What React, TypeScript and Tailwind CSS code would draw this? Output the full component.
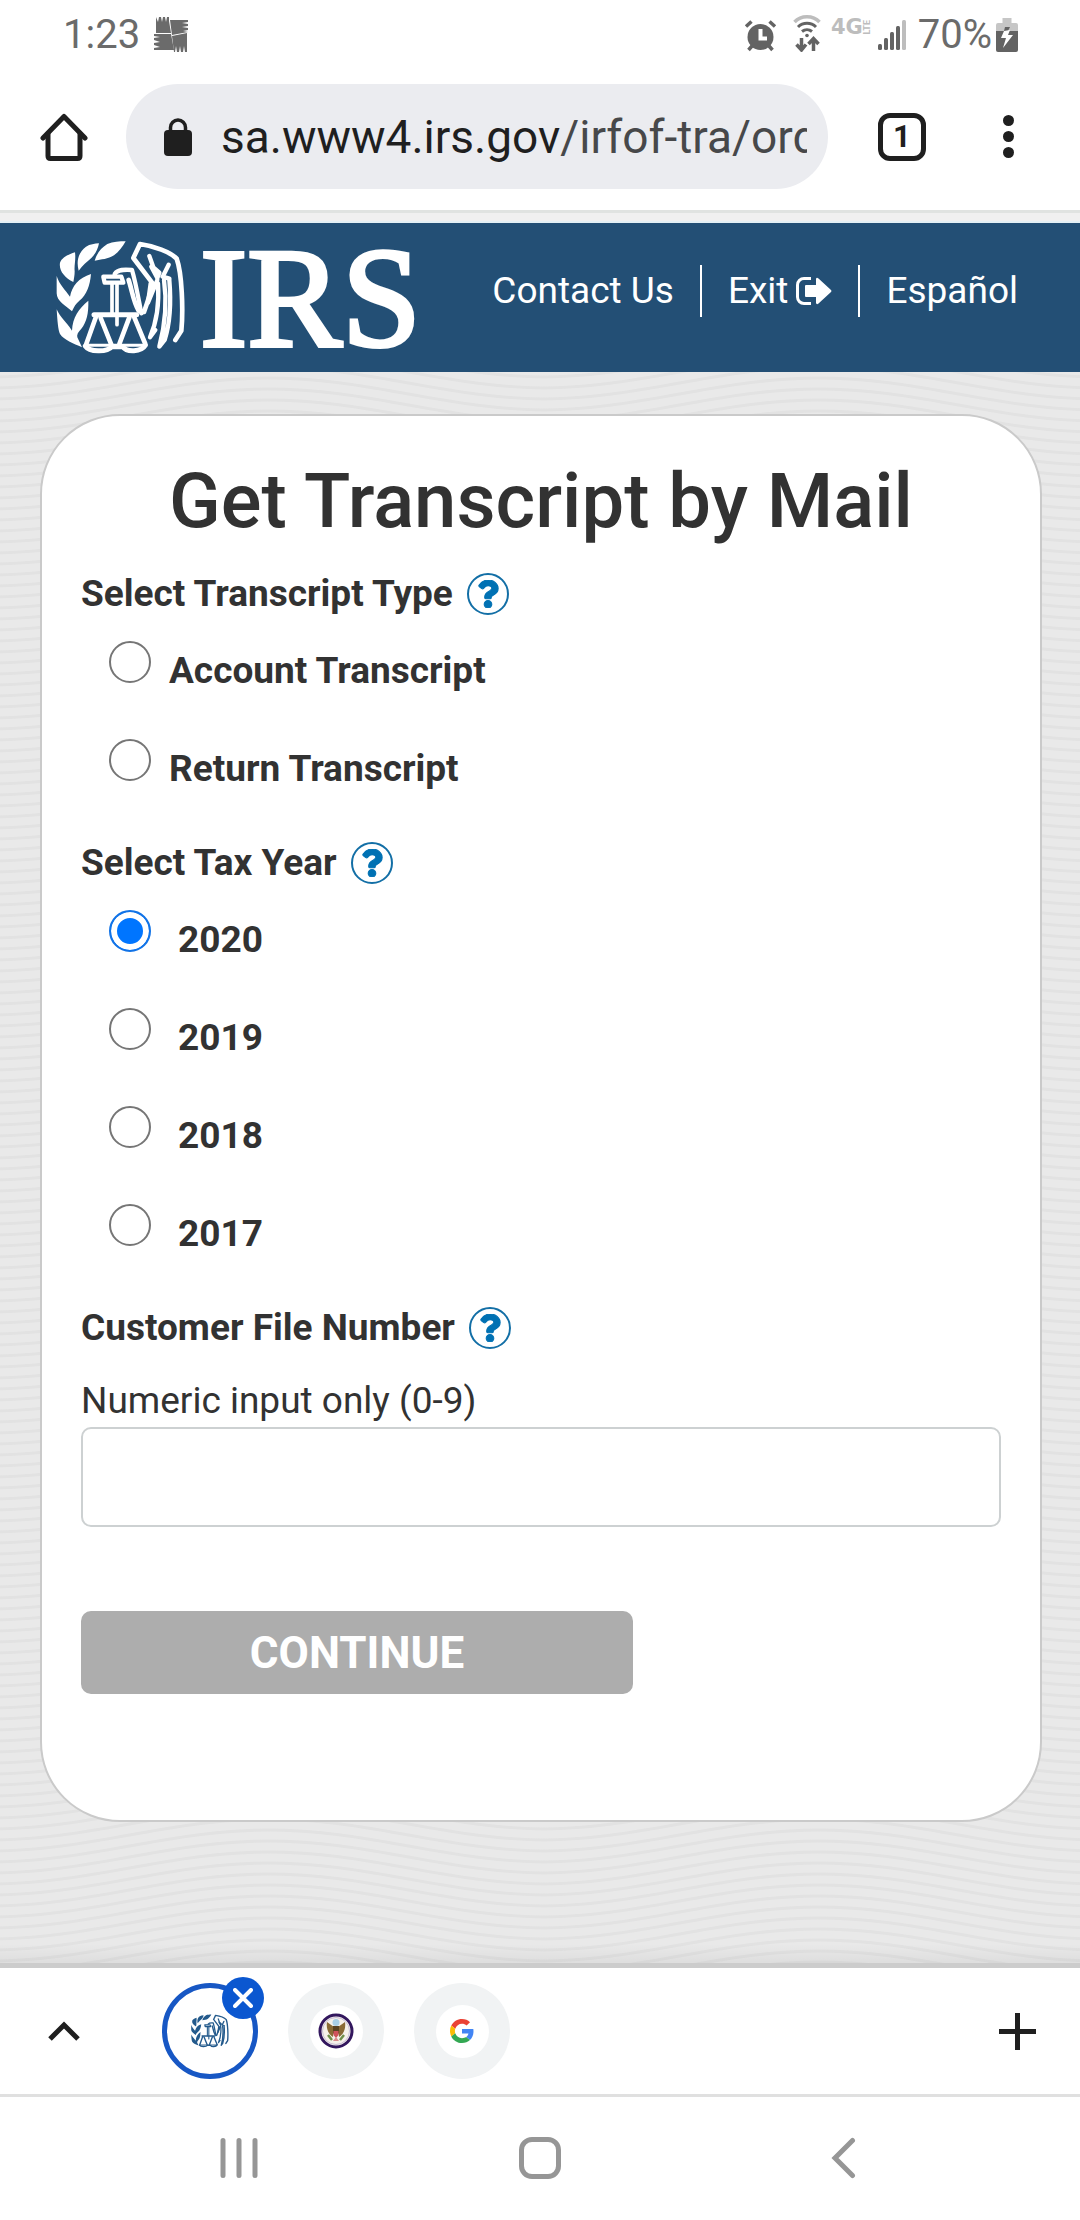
import { useState } from 'react';
import { FaQuestion } from 'react-icons/fa';

interface RadioOption {
  value: string;
  label: string;
}

const transcriptTypes: RadioOption[] = [
  { value: 'account', label: 'Account Transcript' },
  { value: 'return', label: 'Return Transcript' },
];

const taxYears: RadioOption[] = [
  { value: '2020', label: '2020' },
  { value: '2019', label: '2019' },
  { value: '2018', label: '2018' },
  { value: '2017', label: '2017' },
];

function EagleMark({ className }: { className?: string }) {
  return (
    <svg viewBox="36 30 390 345" className={className} fill="currentColor" aria-hidden="true">
      {/* laurel */}
      <path d="M152 92C160 66 172 54 190 42C208 35 226 34 245 34C236 50 224 66 210 76C192 88 172 88 152 92Z" />
      <path d="M104 122C96 92 104 66 126 50C138 43 152 41 165 40C162 56 156 70 142 84C128 96 116 106 104 122Z" />
      <path d="M88 156C62 142 44 122 48 98C54 82 72 74 93 67C96 90 90 106 92 124C92 136 90 146 88 156Z" />
      <path d="M38 138C46 164 64 180 78 200C84 168 104 144 141 132C138 166 128 196 106 212C96 220 90 230 84 244C66 228 38 214 38 190Z" />
      <path d="M38 238C48 262 68 276 84 302C86 262 104 236 133 212C134 250 128 276 112 296C102 306 98 314 100 322L114 352C88 340 60 330 48 312C42 300 40 270 38 238Z" />
      <g fill="none" stroke="currentColor" strokeWidth="13" strokeLinejoin="round" strokeLinecap="round">
        {/* scales */}
        <path d="M178 140H232L238 158H182Z" />
        <path d="M204 162V250M219 162V284" strokeWidth="11" />
        <path d="M150 254H278" strokeWidth="15" />
        <path d="M156 260L126 344M170 264L202 344" strokeWidth="14" />
        <path d="M256 262L226 342M270 260L304 342" strokeWidth="14" />
        <path d="M124 348C136 366 188 368 204 350L236 350C248 368 292 366 304 346" strokeWidth="15" />
        <path d="M128 346H300" strokeWidth="9" />
        {/* wing and head */}
        <path d="M212 132C222 118 240 118 264 120C276 160 284 210 292 250" strokeWidth="13" />
        <path d="M254 150C264 180 268 216 284 242L300 246C312 210 324 180 326 160L268 84L288 42C330 48 380 66 398 86C414 130 418 240 412 302L394 330" strokeWidth="14" />
        <path d="M316 78L328 112L346 128L340 144L322 110M374 104L356 140L376 146" />
        <path d="M340 150L312 218L320 160" />
        <path d="M342 160C346 220 336 280 318 322L334 300" />
        <path d="M360 150C370 220 362 290 346 350L362 330C378 280 382 220 376 150" />
      </g>
    </svg>
  );
}

function HomeIcon() {
  return (
    <svg viewBox="0 0 48 48" className="size-12" fill="none" stroke="currentColor" strokeWidth="5" strokeLinecap="round" strokeLinejoin="round" aria-hidden="true">
      <path d="M3 25L24 3.500L45 25" />
      <path d="M8 21V43Q8 45.500 10.500 45.500H37.500Q40 45.500 40 43V21" />
    </svg>
  );
}

function LockIcon() {
  return (
    <svg viewBox="0 0 30 38" className="h-[38px] w-[30px] shrink-0" aria-hidden="true">
      <rect x="1" y="12" width="28" height="26" rx="4" fill="#1f1f1f" />
      <path d="M7.500 14V9.500a7.500 7.500 0 0 1 15 0V14" fill="none" stroke="#1f1f1f" strokeWidth="3.500" />
    </svg>
  );
}

function AntivirusIcon() {
  return (
    <svg viewBox="0 0 35 36" className="h-9 w-[35px]" fill="#6b6b6b" aria-hidden="true">
      <path d="M2 0L4 5L5 0H7L8 5L9 0H11L12 5L13 0H15L15 4L17 16H2Z" />
      <path d="M16 3H34V5L28 6L34 7V9L28 10L34 11V13L29 14L34 15L18 18Z" />
      <path d="M0 17H17L20 33H0V31L6 30L0 28V26L6 25L0 23V21L6 20L0 19Z" />
      <path d="M18 19L33 16V35H31L30 29L29 35H27L26 29L25 35H23L22 29L21 35H20Z" />
    </svg>
  );
}

function StatusBar() {
  return (
    <div className="flex h-[66px] items-center pt-1 pr-[62px] pl-[63px] text-[#6b6b6b]">
      <span className="text-[40px] leading-[60px]">1:23</span>
      <span className="ml-3.5">
        <AntivirusIcon />
      </span>
      <div className="ml-auto flex items-center">
        {/* alarm */}
        <svg viewBox="0 0 33 33" className="size-[33px]" fill="#636363" aria-hidden="true">
          <circle cx="16.500" cy="18" r="13" />
          <path d="M2 7.500L7.500 2.500M31 7.500L25.500 2.500M4.500 31L8 27M28.500 31L25 27" stroke="#636363" strokeWidth="3.500" />
          <path d="M16.500 10V19.500H23" fill="none" stroke="#fff" strokeWidth="4" />
        </svg>
        {/* wifi with traffic arrows */}
        <svg viewBox="0 0 28 38" className="mb-1 ml-4 h-[38px] w-7" fill="none" aria-hidden="true">
          <path d="M1.500 8C8 1 20 1 26.500 8" stroke="#bdbdbd" strokeWidth="3.500" />
          <path d="M5 13C10 8 18 8 23 13M9 17.500C12 15 16 15 19 17.500" stroke="#636363" strokeWidth="3" />
          <circle cx="14" cy="21.500" r="1.800" fill="#636363" />
          <path d="M8.500 24V35M3.500 30.500L8.500 36L13 30.500M20.500 37V26M15.500 30L20.500 24.500L25.500 30" stroke="#636363" strokeWidth="3.500" />
        </svg>
        <span className="mb-4 ml-2.5 flex h-5 items-center text-[#bdbdbd]">
          <span className="font-['DejaVu_Sans',sans-serif] text-[21px] leading-5 font-bold">4G</span>
          <span className="rotate-180 text-[9px] leading-[9px] font-bold [writing-mode:vertical-rl]">LTE</span>
        </span>
        {/* signal */}
        <svg viewBox="0 0 28 32" className="ml-1.5 h-8 w-7" aria-hidden="true">
          <rect x="0" y="25" width="4" height="6" rx="1.500" fill="#636363" />
          <rect x="6" y="19" width="4" height="12" rx="1.500" fill="#636363" />
          <rect x="12" y="13" width="4" height="18" rx="1.500" fill="#636363" />
          <rect x="18" y="7" width="4" height="24" rx="1.500" fill="#636363" />
          <rect x="24" y="1" width="4" height="30" rx="1.500" fill="#bdbdbd" />
        </svg>
        <span className="ml-3 text-[40px] leading-[60px]">70%</span>
        {/* battery */}
        <svg viewBox="0 0 22 34" className="ml-1 h-[34px] w-[22px]" aria-hidden="true">
          <path d="M6.500 0H15.500V5H20Q22 5 22 7V14H0V7Q0 5 2 5H6.500Z" fill="#c6c6c6" />
          <path d="M0 13H22V32Q22 34 20 34H2Q0 34 0 32Z" fill="#636363" />
          <path d="M9 9H14L12 13H8Z" fill="#636363" />
          <path d="M8 13L5 20H10L7 30L17 17H12L14 12Z" fill="#fff" />
        </svg>
      </div>
    </div>
  );
}

function BrowserBar() {
  return (
    <div className="flex items-center border-b-[3px] border-[#e0e3e1] pt-[18px] pr-16 pb-[21px] pl-10 text-[#1f1f1f]">
      <button type="button" aria-label="Home">
        <HomeIcon />
      </button>
      <button
        type="button"
        aria-label="Address bar"
        className="ml-[38px] flex h-[105px] min-w-0 flex-1 items-center rounded-full bg-[#ebecf0] pr-[21px] pl-[37px]"
      >
        <LockIcon />
        <span className="ml-7 min-w-0 flex-1 overflow-hidden text-left text-[46px] leading-[60px] whitespace-nowrap">
          sa.www4.irs.gov<span className="text-[#47484a]">/irfof-tra/order</span>
        </span>
      </button>
      <button
        type="button"
        aria-label="Open tabs"
        className="ml-[50px] flex size-12 items-center justify-center rounded-xl border-[5px] border-[#1f1f1f] text-[31px] leading-9 font-bold"
      >
        1
      </button>
      <button type="button" aria-label="Menu" className="ml-[74px] flex w-4 flex-col items-center gap-[5px]">
        <span className="size-[11px] rounded-full bg-[#1f1f1f]" />
        <span className="size-[11px] rounded-full bg-[#1f1f1f]" />
        <span className="size-[11px] rounded-full bg-[#1f1f1f]" />
      </button>
    </div>
  );
}

function SiteHeader() {
  return (
    <header className="flex h-[149px] items-center bg-[#234f75] pr-[62px] pl-14 text-white">
      <a href="#" aria-label="IRS home" className="flex items-center">
        <EagleMark className="h-[115px] w-[130px]" />
        <span className="ml-3.5 font-['Liberation_Serif',serif] text-[142px] leading-[146px] [-webkit-text-stroke:4px_#fff]">IRS</span>
      </a>
      <nav className="mb-3.5 ml-auto flex items-center text-[37px] leading-[52px]">
        <a href="#" className="pr-[26px]">Contact Us</a>
        <a href="#" className="flex items-center gap-2 border-x-2 border-white px-[26px]">
          Exit
          <svg viewBox="0 0 36 28" className="h-7 w-9" aria-hidden="true">
            <path d="M15 1.500H8a6.500 6.500 0 0 0-6.500 6.500V20a6.500 6.500 0 0 0 6.500 6.500H15" fill="none" stroke="#fff" strokeWidth="3" />
            <path d="M10 8H20V2Q20.500 0 22.500 1.500L35 13Q36 14 35 15L22.500 26.500Q20.500 28 20 26V20H10Q9 20 9 19V9Q9 8 10 8Z" fill="#fff" />
          </svg>
        </a>
        <a href="#" className="pl-[26px]">Español</a>
      </nav>
    </header>
  );
}

// Fine wave lines behind the card
function WaveBackground() {
  const rows = [-44, -33, -22, -11, 0, 11, 22, 33, 44];
  return (
    <svg className="absolute inset-0 size-full" aria-hidden="true">
      <defs>
        <pattern id="waves" x="-6" width="550" height="11" patternUnits="userSpaceOnUse">
          {rows.map(y => (
            <path
              key={y}
              d={`M-4 ${y + 16}C96 ${y + 16} 175 ${y - 16} 275 ${y - 16}S454 ${y + 16} 554 ${y + 16}`}
              fill="none"
              stroke="#e2e2e2"
              strokeWidth="3"
            />
          ))}
        </pattern>
      </defs>
      <rect width="100%" height="100%" fill="url(#waves)" />
    </svg>
  );
}

function HelpButton({ topic }: { topic: string }) {
  return (
    <button
      type="button"
      aria-label={`Help: ${topic}`}
      className="flex size-[42px] items-center justify-center rounded-full border-2 border-[#136fa6] text-[#0071b3]"
    >
      <FaQuestion className="h-7 w-[22px]" stroke="currentColor" strokeWidth="20" />
    </button>
  );
}

interface RadioGroupProps {
  name: string;
  legend: string;
  options: RadioOption[];
  value: string;
  onChange: (value: string) => void;
  labelClass: string;
}

function RadioGroup({ name, legend, options, value, onChange, labelClass }: RadioGroupProps) {
  return (
    <div role="radiogroup" aria-labelledby={`${name}-legend`}>
      <div className="flex items-center gap-3.5">
        <h2 id={`${name}-legend`} className="text-[37px] leading-10 font-bold">{legend}</h2>
        <HelpButton topic={legend} />
      </div>
      <div className="mt-[26px] ml-7 flex flex-col gap-12">
        {options.map(option => (
          <div key={option.value} className="flex items-start">
            <input
              type="radio"
              id={`${name}-${option.value}`}
              name={name}
              value={option.value}
              checked={value === option.value}
              onChange={() => onChange(option.value)}
              className="size-[42px] appearance-none rounded-full border-2 border-[#767676] bg-white checked:border-[#1273e6] checked:bg-[#0075ff] checked:shadow-[inset_0_0_0_6px_#fff]"
            />
            <label htmlFor={`${name}-${option.value}`} className={`pt-2.5 text-[37px] leading-10 font-bold ${labelClass}`}>
              {option.label}
            </label>
          </div>
        ))}
      </div>
    </div>
  );
}

function TranscriptForm() {
  const [type, setType] = useState('');
  const [year, setYear] = useState('2020');
  const [fileNumber, setFileNumber] = useState('');

  return (
    <form
      onSubmit={e => e.preventDefault()}
      className="relative rounded-[80px] border-2 border-[#cacaca] bg-white px-[39px] pt-10 pb-[126px] text-[#323232]"
    >
      <h1 className="text-center text-[76px] leading-[90px] font-medium">Get Transcript by Mail</h1>

      <div className="mt-[27px] flex flex-col gap-[53px]">
        <RadioGroup
          name="type"
          legend="Select Transcript Type"
          options={transcriptTypes}
          value={type}
          onChange={setType}
          labelClass="ml-[18px]"
        />
        <RadioGroup
          name="year"
          legend="Select Tax Year"
          options={taxYears}
          value={year}
          onChange={setYear}
          labelClass="ml-[27px]"
        />
        <div>
          <div className="flex items-center gap-3.5">
            <h2 className="text-[37px] leading-10 font-bold">Customer File Number</h2>
            <HelpButton topic="Customer File Number" />
          </div>
          <label htmlFor="file-number" className="mt-8 block text-[37px] leading-10">
            Numeric input only (0-9)
          </label>
          <input
            id="file-number"
            type="text"
            inputMode="numeric"
            value={fileNumber}
            onChange={e => setFileNumber(e.target.value.replace(/\D/g, ''))}
            className="mt-1.5 h-[100px] w-full rounded-[10px] border-2 border-[#cdd1d2] bg-white px-6 text-[37px]"
          />
        </div>
      </div>

      <button type="submit" className="mt-[84px] h-[83px] w-3/5 rounded-[10px] bg-[#adadad] text-[44px] font-bold text-white">
        CONTINUE
      </button>
    </form>
  );
}

function SealIcon() {
  return (
    <svg viewBox="0 0 36 36" className="size-9" aria-hidden="true">
      <circle cx="18" cy="18" r="16" fill="#f6f1ea" stroke="#33175e" strokeWidth="3" />
      <circle cx="18" cy="18" r="13.500" fill="none" stroke="#c9bfd8" strokeWidth="1" />
      <circle cx="18" cy="9.500" r="3.500" fill="#a9cfe6" />
      <path d="M9 9C8 15 10 21 15 24L16 14ZM27 9C28 15 26 21 21 24L20 14Z" fill="#8a6a35" />
      <path d="M15 13H21V20L18 24L15 20Z" fill="#5b4322" />
      <path d="M15.500 18H20.500V22L18 25L15.500 22Z" fill="#d0525b" />
      <path d="M10 22L14 27M26 22L22 27" stroke="#6f8f4a" strokeWidth="2.500" />
      <path d="M15 28L18 24L21 28Z" fill="#d98c8c" />
    </svg>
  );
}

function GoogleIcon() {
  return (
    <svg viewBox="0 0 48 48" className="size-6" aria-hidden="true">
      <path fill="#EA4335" d="M24 9.500c3.540 0 6.710 1.220 9.210 3.600l6.850-6.850C35.900 2.380 30.470 0 24 0 14.620 0 6.510 5.380 2.560 13.220l7.980 6.190C12.430 13.720 17.740 9.500 24 9.500z" />
      <path fill="#4285F4" d="M46.980 24.550c0-1.570-.15-3.090-.38-4.550H24v9.020h12.940c-.58 2.960-2.260 5.480-4.780 7.180l7.730 6c4.510-4.180 7.090-10.360 7.090-17.650z" />
      <path fill="#FBBC05" d="M10.530 28.590c-.48-1.450-.76-2.990-.76-4.590s.27-3.140.76-4.590l-7.980-6.190C.92 16.460 0 20.120 0 24c0 3.880.92 7.540 2.560 10.780l7.970-6.190z" />
      <path fill="#34A853" d="M24 48c6.480 0 11.930-2.130 15.890-5.810l-7.730-6c-2.150 1.450-4.920 2.300-8.160 2.300-6.260 0-11.570-4.220-13.470-9.910l-7.980 6.190C6.510 42.620 14.620 48 24 48z" />
    </svg>
  );
}

function TabStrip() {
  return (
    <div className="flex h-[129px] items-center border-b-[3px] border-[#e0e0e0] bg-white pr-11 pl-12 text-[#1f1f1f]">
      <button type="button" aria-label="Show tabs">
        <svg viewBox="0 0 32 20" className="h-5 w-8" fill="none" stroke="currentColor" strokeWidth="5" aria-hidden="true">
          <path d="M2 18L16 4L30 18" />
        </svg>
      </button>
      <div className="ml-[82px] flex items-center gap-[30px]">
        <div className="relative">
          <button
            type="button"
            aria-label="IRS tab"
            className="flex size-24 items-center justify-center rounded-full border-[5px] border-[#1757c4] bg-white text-[#235a8c]"
          >
            <EagleMark className="h-[34px] w-[38px]" />
          </button>
          <button
            type="button"
            aria-label="Close tab"
            className="absolute -top-1.5 -right-1.5 flex size-[42px] items-center justify-center rounded-full bg-[#0b57d0]"
          >
            <svg viewBox="0 0 20 20" className="size-5" stroke="#fff" strokeWidth="4" strokeLinecap="round" aria-hidden="true">
              <path d="M2 2L18 18M18 2L2 18" />
            </svg>
          </button>
        </div>
        <button type="button" aria-label="Passport tab" className="flex size-24 items-center justify-center rounded-full bg-[#f1f3f4]">
          <span className="flex size-[53px] items-center justify-center rounded-full bg-white">
            <SealIcon />
          </span>
        </button>
        <button type="button" aria-label="Google tab" className="flex size-24 items-center justify-center rounded-full bg-[#f1f3f4]">
          <span className="flex size-[53px] items-center justify-center rounded-full bg-white">
            <GoogleIcon />
          </span>
        </button>
      </div>
      <button type="button" aria-label="New tab" className="ml-auto">
        <svg viewBox="0 0 37 37" className="size-[37px]" stroke="currentColor" strokeWidth="5" aria-hidden="true">
          <path d="M18.500 0V37M0 18.500H37" />
        </svg>
      </button>
    </div>
  );
}

function SystemNav() {
  return (
    <div className="flex h-[123px] items-center justify-between bg-white px-[218px] pb-0.5 text-[#969696]">
      <button type="button" aria-label="Recent apps">
        <svg viewBox="0 0 42 42" className="size-[42px]" stroke="currentColor" strokeWidth="5" strokeLinecap="round" aria-hidden="true">
          <path d="M5 3.500V38.500M21 3.500V38.500M37 3.500V38.500" />
        </svg>
      </button>
      <button type="button" aria-label="Home screen" className="size-[42px] rounded-[13px] border-[5px] border-current" />
      <button type="button" aria-label="Back">
        <svg viewBox="0 0 42 42" className="size-[42px]" fill="none" stroke="currentColor" strokeWidth="5" strokeLinecap="round" aria-hidden="true">
          <path d="M32.500 3.500L15 21L32.500 38.500" />
        </svg>
      </button>
    </div>
  );
}

export default function App() {
  return (
    <div className="flex min-h-screen flex-col bg-white font-[Roboto,sans-serif]">
      <StatusBar />
      <BrowserBar />
      <div className="h-2.5 border-b-2 border-[#e4f0f5] bg-[#f0f0f0]" />
      <SiteHeader />
      <main className="relative flex-1 bg-[#e9e9e9] pt-[42px] pr-[38px] pb-[146px] pl-10">
        <WaveBackground />
        <TranscriptForm />
        {/* shade above the tab strip */}
        <div className="absolute inset-x-0 bottom-0 h-6 border-b-[5px] border-[#cccccc] bg-gradient-to-b from-transparent to-black/5" />
      </main>
      <TabStrip />
      <SystemNav />
    </div>
  );
}
